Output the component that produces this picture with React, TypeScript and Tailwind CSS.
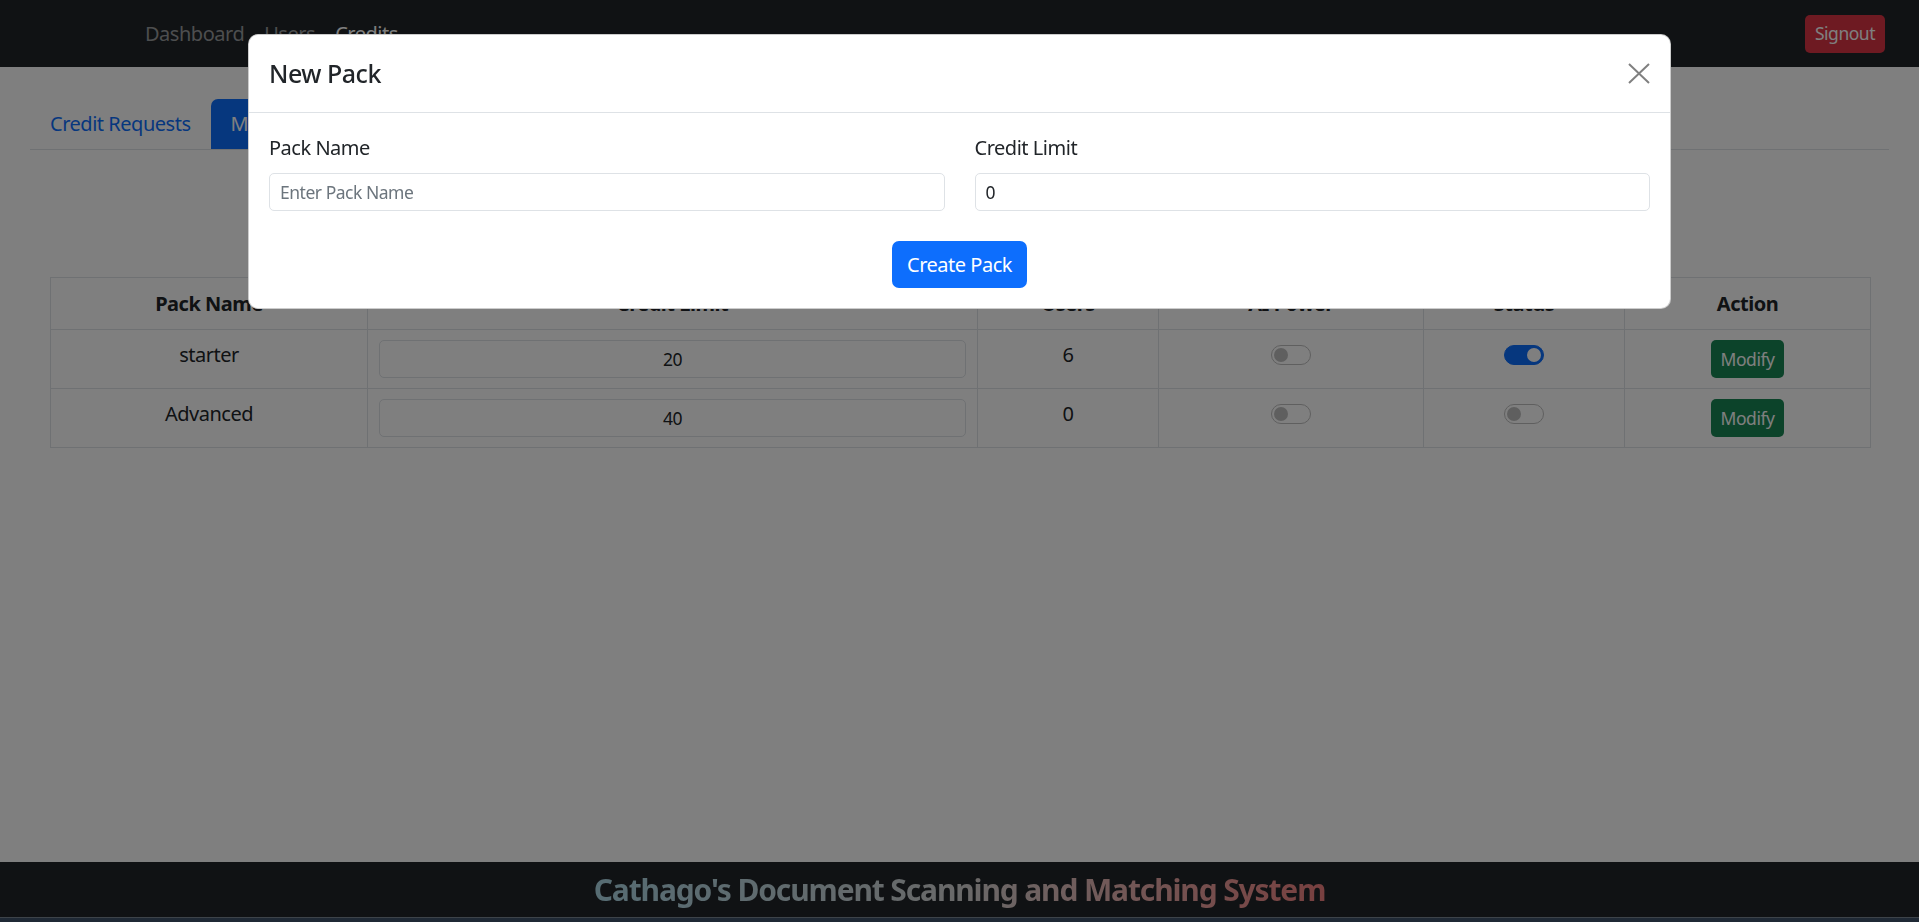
import React from "react";

function Toggle({ on }: { on: boolean }) {
  return (
    <div className="flex justify-center pt-[5px]">
      {on ? (
        <div className="w-[40px] h-[20px] rounded-full bg-[#0d6efd] border border-[#0d6efd] flex items-center justify-end pr-[2px]">
          <div className="w-[14px] h-[14px] rounded-full bg-white" />
        </div>
      ) : (
        <div className="w-[40px] h-[20px] rounded-full bg-white border border-[#bfbfbf] flex items-center pl-[2px]">
          <div className="w-[14px] h-[14px] rounded-full bg-[#bfbfbf]" />
        </div>
      )}
    </div>
  );
}

const rows = [
  { name: "starter", limit: "20", users: "6", ai: false, status: true },
  { name: "Advanced", limit: "40", users: "0", ai: false, status: false },
];

export default function App() {
  return (
    <div className="relative min-h-screen flex flex-col bg-white text-[#212529] font-['Noto_Sans',sans-serif] tracking-[-0.03em]">
      {/* Navbar */}
      <nav className="h-[67px] bg-[#212529] flex items-center justify-between pl-[135px] pr-[34px] shrink-0">
        <div className="flex items-center text-[20px]">
          <span className="px-[10px] text-[#9a9c9e]">Dashboard</span>
          <span className="px-[10px] text-[#9a9c9e]">Users</span>
          <span className="px-[10px] text-white">Credits</span>
        </div>
        <button className="h-[38px] px-[10px] rounded-[5px] bg-[#dc3545] text-white text-[17.5px]">
          Signout
        </button>
      </nav>

      {/* Main */}
      <main className="flex-1">
        <div className="mx-[30px] mt-[32px] border-b border-[#dee2e6] flex text-[20px]">
          <span className="px-[20px] h-[50px] flex items-center text-[#0d6efd]">Credit Requests</span>
          <span className="px-[20px] h-[50px] flex items-center bg-[#0d6efd] text-white rounded-t-[7px]">Manage Packs</span>
        </div>

        <div className="h-[127px] flex items-center justify-center">
          <button className="h-[47px] px-[15px] rounded-[7px] bg-[#0d6efd] text-white text-[20px]">New Pack</button>
        </div>

        <table className="ml-[50px] w-[1820px] border-collapse text-[20px] table-fixed">
          <colgroup>
            <col className="w-[317px]" />
            <col className="w-[610px]" />
            <col className="w-[181px]" />
            <col className="w-[265px]" />
            <col className="w-[201px]" />
            <col className="w-[246px]" />
          </colgroup>
          <thead>
            <tr className="h-[52px]">
              {["Pack Name", "Credit Limit", "Users", "AI Power", "Status", "Action"].map((h) => (
                <th key={h} className="border border-[#dee2e6] align-middle font-bold text-center">
                  {h}
                </th>
              ))}
            </tr>
          </thead>
          <tbody>
            {rows.map((r) => (
              <tr key={r.name} className="h-[59px]">
                <td className="border border-[#dee2e6] align-top text-center py-[10px] leading-[30px]">{r.name}</td>
                <td className="border border-[#dee2e6] align-top py-[10px] px-[11px]">
                  <div className="h-[38px] border border-[#dee2e6] rounded-[5px] flex items-center justify-center text-[17.5px]">
                    {r.limit}
                  </div>
                </td>
                <td className="border border-[#dee2e6] align-top text-center py-[10px] leading-[30px]">{r.users}</td>
                <td className="border border-[#dee2e6] align-top py-[10px]">
                  <Toggle on={r.ai} />
                </td>
                <td className="border border-[#dee2e6] align-top py-[10px]">
                  <Toggle on={r.status} />
                </td>
                <td className="border border-[#dee2e6] align-top py-[10px]">
                  <div className="flex justify-center">
                    <button className="h-[38px] px-[10px] rounded-[5px] bg-[#198754] text-white text-[17.5px]">Modify</button>
                  </div>
                </td>
              </tr>
            ))}
          </tbody>
        </table>
      </main>

      {/* Footer */}
      <footer className="shrink-0">
        <div className="h-[55px] bg-[#212529] flex items-center justify-center">
          <span className="text-[30px] font-bold tracking-[-0.038em] bg-linear-to-r from-[#add8e6] via-[#d3d3d3] to-[#f08080] bg-clip-text text-transparent">
            Cathago's Document Scanning and Matching System
          </span>
        </div>
        <div className="h-[1px] bg-[#7a8692]" />
        <div className="h-[4px] bg-[#3e526a]" />
      </footer>

      {/* Modal */}
      <div className="fixed inset-0 bg-black/50 flex justify-center items-start pt-[34px]">
        <div className="w-[1423px] bg-white rounded-[10px] border border-black/20">
          <div className="h-[78px] px-[20px] flex items-center justify-between border-b border-[#dee2e6]">
            <h5 className="text-[25px] font-medium">New Pack</h5>
            <button className="w-[24px] h-[24px] flex items-center justify-center mr-[-1px]">
              <svg width="22" height="21" viewBox="0 0 22 21">
                <path d="M1 1 L21 20 M21 1 L1 20" stroke="#808080" strokeWidth="2" fill="none" />
              </svg>
            </button>
          </div>
          <div className="p-[20px]">
            <div className="grid grid-cols-2 gap-x-[30px]">
              <div>
                <label className="block text-[20px] leading-[30px] mb-[10px]">Pack Name</label>
                <input
                  className="w-full h-[38px] border border-[#dee2e6] rounded-[5px] px-[10px] text-[17.5px] placeholder:text-[#6c757d] outline-none"
                  placeholder="Enter Pack Name"
                />
              </div>
              <div>
                <label className="block text-[20px] leading-[30px] mb-[10px]">Credit Limit</label>
                <input
                  className="w-full h-[38px] border border-[#dee2e6] rounded-[5px] px-[10px] text-[17.5px] outline-none"
                  defaultValue="0"
                />
              </div>
            </div>
            <div className="flex justify-center mt-[30px]">
              <button className="h-[47px] px-[15px] rounded-[7px] bg-[#0d6efd] text-white text-[20px]">Create Pack</button>
            </div>
          </div>
        </div>
      </div>
    </div>
  );
}
